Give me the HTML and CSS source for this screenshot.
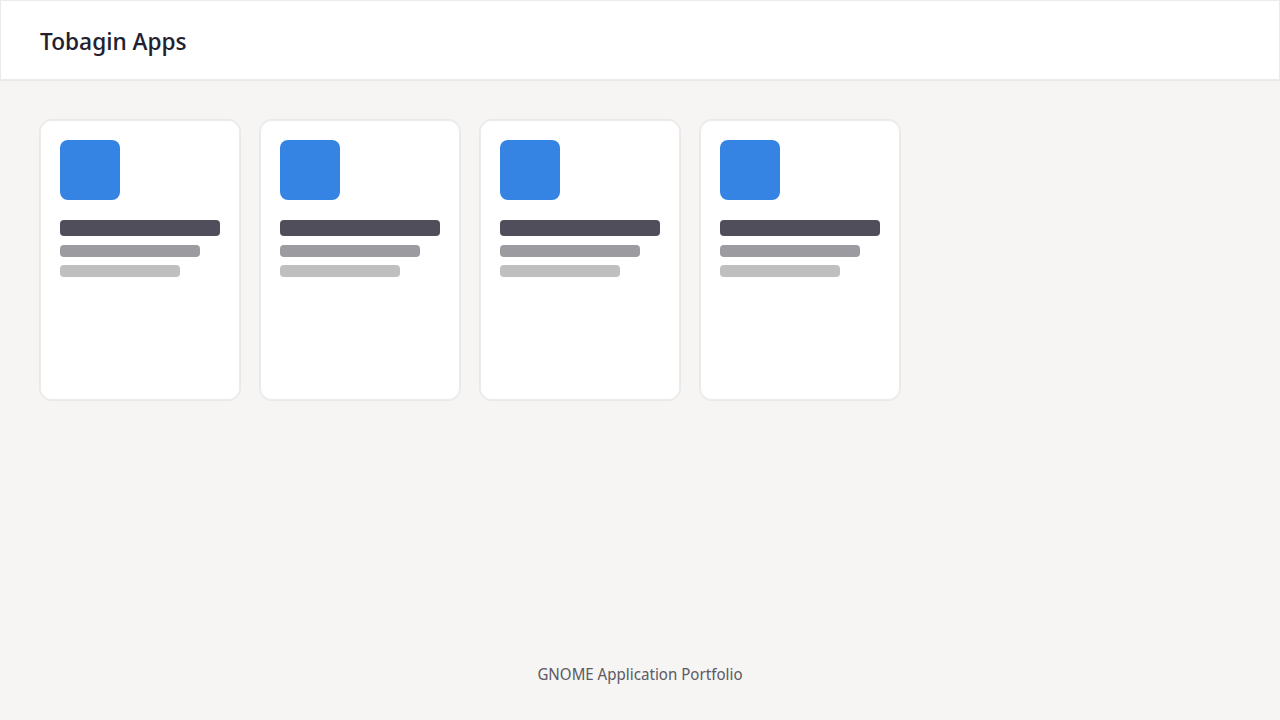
FILE: index.html
```html
<!DOCTYPE html>
<html lang="en">
<head>
<meta charset="utf-8">
<title>Tobagin Apps</title>
<link rel="stylesheet" href="styles.css">
</head>
<body>
<header class="header"><h1 class="title">Tobagin Apps</h1></header>
<main class="cards">
<article class="card"><div class="icon"></div><div class="line name"></div><div class="line summary"></div><div class="line detail"></div></article>
<article class="card"><div class="icon"></div><div class="line name"></div><div class="line summary"></div><div class="line detail"></div></article>
<article class="card"><div class="icon"></div><div class="line name"></div><div class="line summary"></div><div class="line detail"></div></article>
<article class="card"><div class="icon"></div><div class="line name"></div><div class="line summary"></div><div class="line detail"></div></article>
</main>
<footer class="footer">GNOME Application Portfolio</footer>
</body>
</html>
```
FILE: styles.css
```css
* { box-sizing: border-box; }
body {
  margin: 0;
  min-height: 100vh;
  display: flex;
  flex-direction: column;
  background: #f6f5f4;
  font-family: "Noto Sans Display", "Noto Sans", sans-serif;
}
.header {
  padding: 24px 39px 23px;
  background: #fff;
  border: 1px solid #ebebeb;
  box-shadow: 0 1px #e9e8e7;
}
.title {
  margin: 0;
  font-size: 24px;
  line-height: 31px;
  font-weight: 500;
  color: #241f31;
}
.cards {
  flex: 1;
  display: grid;
  grid-template-columns: repeat(auto-fill, 200px);
  align-content: start;
  gap: 20px;
  padding: 40px;
}
.card {
  min-height: 280px;
  padding: 20px;
  background: #fff;
  border-radius: 12px;
  box-shadow: 0 0 0 1px #e9e8e7, inset 0 0 0 1px #ebebeb;
}
.icon {
  width: 60px;
  height: 60px;
  margin-bottom: 20px;
  border-radius: 8px;
  background: #3584e4;
}
.line {
  height: 12px;
  margin-bottom: 8px;
  border-radius: 4px;
}
.name { height: 16px; margin-bottom: 9px; background: #504e5b; }
.summary { width: 140px; background: #9c9ba0; }
.detail { width: 120px; background: #c0bfc0; }
.footer {
  padding: 0 20px 35px;
  text-align: center;
  font-size: 16px;
  line-height: 22px;
  color: #5e5c64;
}
```
